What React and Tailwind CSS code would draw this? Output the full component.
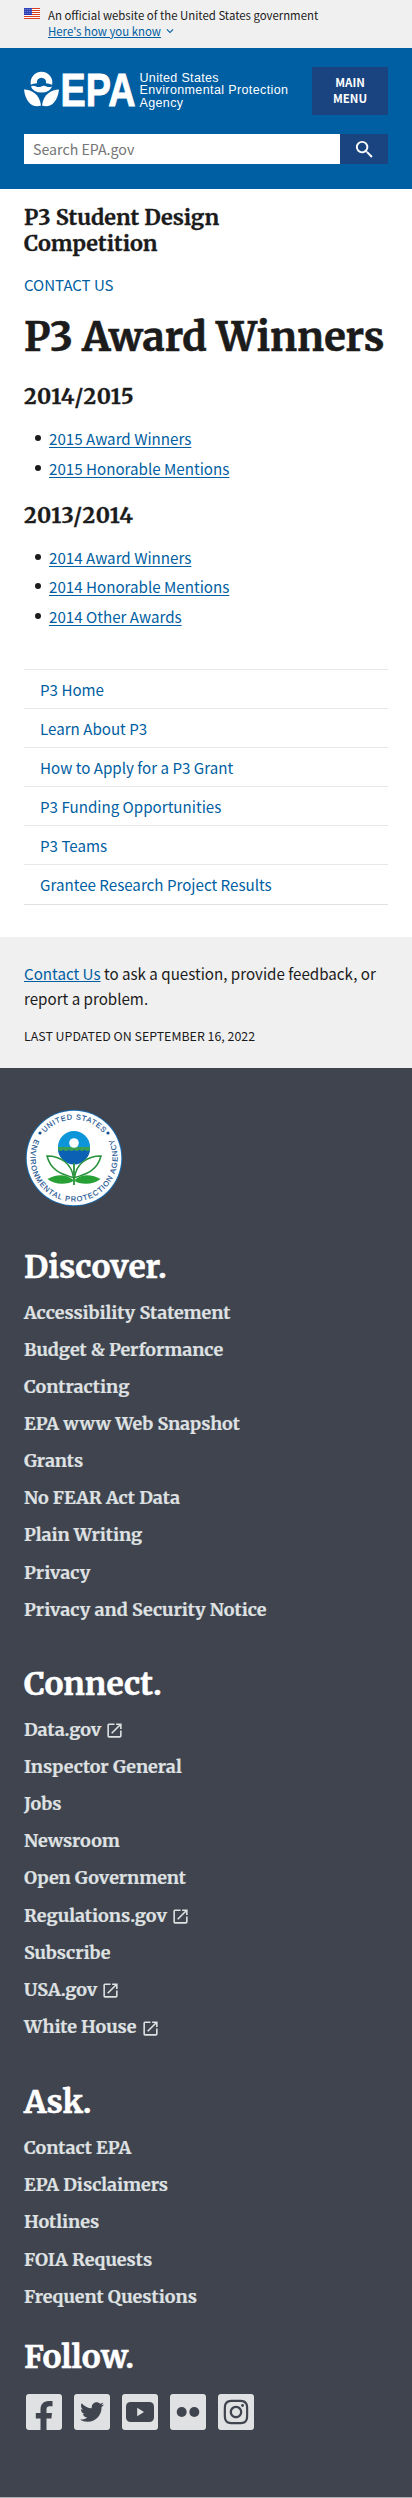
import { MdSearch, MdExpandMore, MdLaunch } from "react-icons/md";
import { FaTwitter, FaInstagram } from "react-icons/fa";

function Flag() {
  return (
    <svg width="16" height="11" viewBox="0 0 16 11" className="mt-2 shrink-0">
      <rect width="16" height="11" fill="#fff" />
      {[0, 2, 4, 6, 8, 10].map((y) => (
        <rect key={y} y={y} width="16" height="1" fill="#db3e1f" />
      ))}
      <rect width="8" height="7" fill="#1e33b1" />
      {[1, 3, 5].map((y) =>
        [1, 3, 5, 7].map((x) => <rect key={`${x}-${y}`} x={x - 0.3} y={y - 0.2} width="0.8" height="0.8" fill="#fff" />)
      )}
    </svg>
  );
}

function Logo() {
  return (
    <svg width="266" height="40" viewBox="0 0 266 40" fill="#fff" className="overflow-visible">
      <path d="M6.8 12.8A10.9 10.9 0 1 1 28.2 12.8Q25 11.2 22 11.2A4.6 4.6 0 1 0 13 11.2Q9 11.2 6.8 12.8Z" />
      <path d="M6.9 14.4q2.6-1.2 5.2 0t5.2 0 5.2 0 5.6 0Q25.6 20.5 17.5 20.5T6.9 14.4Z" />
      <path d="M0 17.5C8 18 15.5 22 17 33.5 9.5 36.5 1.5 31 0 17.5Z" />
      <path d="M35 17.5C27 18 19.5 22 18 33.5 25.5 36.5 33.5 31 35 17.5Z" />
      <text x="36.5" y="34.2" fontSize="46.5" fontWeight="700" stroke="#fff" strokeWidth="0.9" textLength="75" lengthAdjust="spacingAndGlyphs" className="font-['Liberation_Sans',sans-serif]">EPA</text>
      <g fontSize="12.5" className="font-['Liberation_Sans',sans-serif]">
        <text x="115.500" y="10" textLength="79">United States</text>
        <text x="115.500" y="22.3" textLength="148.5">Environmental Protection</text>
        <text x="115.500" y="34.7" textLength="43.5">Agency</text>
      </g>
    </svg>
  );
}

function Seal() {
  return (
    <svg width="98" height="98" viewBox="0 0 98 98" className="ml-[1px]">
      <defs>
        <path id="seal-top" d="M10.5 49A38.5 38.5 0 0 1 87.5 49" />
        <path id="seal-bottom" d="M18.19 18.19A43.57 43.57 0 1 0 79.81 18.19" />
      </defs>
      <circle cx="49" cy="49" r="48.3" fill="#1a6cb0" />
      <circle cx="49" cy="49" r="47.3" fill="#fff" />
      <g fontSize="7.4" fill="#16508f" stroke="#16508f" strokeWidth="0.15" className="font-['Liberation_Sans',sans-serif]">
        <text textLength="66"><textPath href="#seal-top" startOffset="50%" textAnchor="middle" textLength="66">UNITED STATES</textPath></text>
        <text textLength="176"><textPath href="#seal-bottom" startOffset="50%" textAnchor="middle" textLength="176">ENVIRONMENTAL PROTECTION AGENCY</textPath></text>
      </g>
      <circle cx="15" cy="24" r="1.6" fill="#16508f" />
      <circle cx="83" cy="24" r="1.6" fill="#16508f" />
      <circle cx="49" cy="38" r="16" fill="#0d95da" />
      <path d="M33 39.5H65A16 16 0 0 1 33 39.5Z" fill="#0b62b5" />
      <path d="M33 38h32v2.5q-2.7 3-5.3 0-2.7 3-5.3 0-2.7 3-5.4 0-2.7 3-5.3 0-2.7 3-5.3 0-2.7 3-5.4 0Z" fill="#39a052" />
      <circle cx="49" cy="34" r="4.8" fill="#fff" />
      <path d="M49 54v22" stroke="#27923b" strokeWidth="1.8" />
      <path d="M48.5 69C44 66 27 66 22 47c14 0 25 8 26.5 22Z" fill="#fff" stroke="#27923b" strokeWidth="1.5" />
      <path d="M49.5 69C54 66 71 66 76 47c-14 0-25 8-26.5 22Z" fill="#fff" stroke="#27923b" strokeWidth="1.5" />
      <path d="M49 71.5C42 64.5 31 65 22.5 70 29 76 43 76 49 71.5ZM49 71.5C56 64.5 67 65 75.5 70 69 76 55 76 49 71.5Z" fill="#27a035" />
    </svg>
  );
}

const nav = ["P3 Home", "Learn About P3", "How to Apply for a P3 Grant", "P3 Funding Opportunities", "P3 Teams", "Grantee Research Project Results"];

const discover = ["Accessibility Statement", "Budget & Performance", "Contracting", "EPA www Web Snapshot", "Grants", "No FEAR Act Data", "Plain Writing", "Privacy", "Privacy and Security Notice"];
const connect = ["Data.gov", "Inspector General", "Jobs", "Newsroom", "Open Government", "Regulations.gov", "Subscribe", "USA.gov", "White House"];
const external = ["Data.gov", "Regulations.gov", "USA.gov", "White House"];
const ask = ["Contact EPA", "EPA Disclaimers", "Hotlines", "FOIA Requests", "Frequent Questions"];

function YearList({ title, items }) {
  return (
    <section>
      <h2 className="font-['Merriweather','Noto_Serif',serif] text-[21.5px] leading-7 font-bold tracking-[0.7px] [-webkit-text-stroke:0.3px]">{title}</h2>
      <ul className="mt-3 pl-[25px]">
        {items.map((t) => (
          <li key={t} className="relative flex h-[29.8px] items-center leading-[30px]">
            <span className="absolute top-[12px] left-[-14px] size-[6px] rounded-full bg-[#1b1b1b]" />
            <a className="text-[#005ea2] underline decoration-1 underline-offset-2">{t}</a>
          </li>
        ))}
      </ul>
    </section>
  );
}

function FooterGroup({ title, items }) {
  return (
    <section>
      <h2 className="h-9 text-[31.7px] leading-9 font-bold text-white [-webkit-text-stroke:0.5px]">{title}</h2>
      <ul className="mt-[9px]">
        {items.map((t) => (
          <li key={t} className="flex h-[37.15px] items-center text-[17.9px] leading-[37px] font-bold text-[#dfe1e2] [-webkit-text-stroke:0.2px]">
            {t}
            {external.includes(t) && <MdLaunch className="mt-[3px] ml-1 size-[19px]" />}
          </li>
        ))}
      </ul>
    </section>
  );
}

function Tile({ children }) {
  return (
    <svg width="36" height="36" viewBox="0 0 36 36">
      <rect width="36" height="36" rx="3" fill="#dfe1e2" />
      {children}
    </svg>
  );
}

export default function App() {
  return (
    <div className="flex h-[2498px] w-[412px] flex-col bg-white font-['Noto_Sans_CJK_SC',sans-serif] text-[15.15px] text-[#1b1b1b]">
      <div className="flex h-12 shrink-0 gap-2 bg-[#f0f0f0] pl-6">
        <Flag />
        <div className="pt-[7px] text-[11.4px] leading-4">
          <p>An official website of the United States government</p>
          <p className="flex items-center">
            <a className="text-[#005ea2] underline">Here's how you know</a>
            <MdExpandMore className="ml-[2px] size-3.5 text-[#005ea2]" />
          </p>
        </div>
      </div>

      <header className="h-[141px] shrink-0 bg-[#005ea2] px-6">
        <div className="flex justify-between">
          <div className="pt-6"><Logo /></div>
          <button className="mt-[19px] h-12 w-[76px] shrink-0 bg-[#1a4480] pb-[2px] text-[11.5px] leading-4 font-bold text-white">MAIN<br />MENU</button>
        </div>
        <div className="mt-[19px] flex h-[30px]">
          <div className="flex-1 bg-white pl-[9px] text-[14.2px] leading-[31px] text-[#757575]">Search EPA.gov</div>
          <div className="flex w-12 items-center justify-center bg-[#1a4480]"><MdSearch className="size-[23px] text-white" /></div>
        </div>
      </header>

      <main className="px-6 pt-4">
        <div className="w-[215px] font-['Merriweather','Noto_Serif',serif] text-[21.6px] leading-[26px] font-bold [-webkit-text-stroke:0.3px]">P3 Student Design Competition</div>
        <div className="mt-4 text-[15px] leading-6 text-[#005ea2]">CONTACT US</div>
        <h1 className="mt-4 mb-[22px] font-['Merriweather','Noto_Serif',serif] text-[39.8px] leading-[48px] font-bold whitespace-nowrap [-webkit-text-stroke:0.6px]">P3 Award Winners</h1>
        <div className="flex flex-col gap-[19px]">
          <YearList title="2014/2015" items={["2015 Award Winners", "2015 Honorable Mentions"]} />
          <YearList title="2013/2014" items={["2014 Award Winners", "2014 Honorable Mentions", "2014 Other Awards"]} />
        </div>
        <nav className="mt-[38px] border-b border-[#dfe1e2]">
          {nav.map((t) => (
            <div key={t} className="h-[39.1px] border-t border-[#e6e8ea] pl-4 leading-[38px] text-[#005ea2]">{t}</div>
          ))}
        </nav>
      </main>

      <div className="mt-8 h-[131px] shrink-0 bg-[#f0f0f0] px-6 pt-6">
        <p className="leading-[25.6px]"><a className="text-[#005ea2] underline">Contact Us</a> to ask a question, provide feedback, or report a problem.</p>
        <p className="mt-[14px] text-[12.4px] leading-5">LAST UPDATED ON SEPTEMBER 16, 2022</p>
      </div>

      <footer className="flex-1 border-b border-[#a9aeb1] bg-[#3f444f] px-6 pt-[41px] font-['Merriweather','Noto_Serif',serif]">
        <Seal />
        <div className="mt-[42px]"><FooterGroup title="Discover." items={discover} /></div>
        <div className="mt-[38px]"><FooterGroup title="Connect." items={connect} /></div>
        <div className="mt-[39px]"><FooterGroup title="Ask." items={ask} /></div>
        <h2 className="mt-6 h-9 text-[31.7px] leading-9 font-bold text-white [-webkit-text-stroke:0.5px]">Follow.</h2>
        <div className="mt-[19px] flex gap-3 pl-[2px]">
          <Tile><path d="M14.5 36V24.5H9.8V19h4.7v-3.5c0-5 3-8.500 8-8.500h4v5.2h-2.800c-2.600 0-3.200 1.300-3.200 3.500V19H26l-.6 5.500h-4.900V36Z" fill="#3f444f" /></Tile>
          <Tile><FaTwitter x="6" y="6" size="24" color="#3f444f" /></Tile>
          <Tile><rect x="4" y="8" width="28" height="20" rx="4.5" fill="#3f444f" /><path d="M15.2 13.8v8.4l6.8-4.2Z" fill="#dfe1e2" /></Tile>
          <Tile><circle cx="11.7" cy="18" r="5" fill="#3f444f" /><circle cx="24.3" cy="18" r="5" fill="#3f444f" /></Tile>
          <Tile><FaInstagram x="4" y="4" size="28" color="#3f444f" /></Tile>
        </div>
      </footer>
    </div>
  );
}
